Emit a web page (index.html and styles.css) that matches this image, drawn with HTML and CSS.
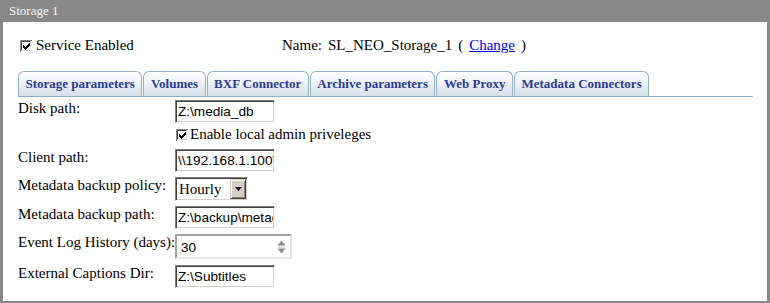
FILE: index.html
```html
<!DOCTYPE html>
<html lang="en">
<head>
<meta charset="utf-8">
<title>Storage 1</title>
<link rel="stylesheet" href="styles.css">
</head>
<body>
<div class="window">
  <div class="titlebar">Storage 1</div>
  <div class="content">
    <div class="header">
      <label class="check-label">
        <svg class="checkbox" width="12" height="12" viewBox="0 0 12 12"><rect x="0" y="0" width="12" height="12" fill="#fff"/><path d="M0.5 12V0.5H12" fill="none" stroke="#808080"/><path d="M1.5 11V1.5H11" fill="none" stroke="#404040"/><path d="M1 10.5H10.5V1" fill="none" stroke="#d4d0c8"/><path d="M3 5h1v3H3z M4 6h1v3H4z M5 7h1v3H5z M6 6h1v3H6z M7 5h1v3H7z M8 4h1v3H8z M9 3h1v3H9z" fill="#000"/></svg>
        <span>Service Enabled</span>
      </label>
      <div class="name">
        <span>Name:</span>
        <span class="name-value">SL_NEO_Storage_1</span>
        <span class="paren">(</span>
        <a class="link" href="#">Change</a>
        <span>)</span>
      </div>
    </div>

    <div class="tabs">
      <div class="tab">Storage parameters</div>
      <div class="tab">Volumes</div>
      <div class="tab">BXF Connector</div>
      <div class="tab">Archive parameters</div>
      <div class="tab">Web Proxy</div>
      <div class="tab">Metadata Connectors</div>
    </div>

    <div class="form">
      <div class="label">Disk path:</div>
      <div class="ctrl"><input class="text" type="text" value="Z:\media_db"></div>

      <div class="label"></div>
      <div class="ctrl">
        <label class="check-label sub">
          <svg class="checkbox" width="12" height="12" viewBox="0 0 12 12"><rect x="0" y="0" width="12" height="12" fill="#fff"/><path d="M0.5 12V0.5H12" fill="none" stroke="#808080"/><path d="M1.5 11V1.5H11" fill="none" stroke="#404040"/><path d="M1 10.5H10.5V1" fill="none" stroke="#d4d0c8"/><path d="M3 5h1v3H3z M4 6h1v3H4z M5 7h1v3H5z M6 6h1v3H6z M7 5h1v3H7z M8 4h1v3H8z M9 3h1v3H9z" fill="#000"/></svg>
          <span>Enable local admin priveleges</span>
        </label>
      </div>

      <div class="label">Client path:</div>
      <div class="ctrl"><input class="text" type="text" value="\\192.168.1.100\media"></div>

      <div class="label">Metadata backup policy:</div>
      <div class="ctrl">
        <div class="select">
          <span class="select-value">Hourly</span>
          <span class="select-btn"><svg width="7" height="4" viewBox="0 0 7 4"><path d="M0 0H7L3.5 4Z" fill="#000"/></svg></span>
        </div>
      </div>

      <div class="label">Metadata backup path:</div>
      <div class="ctrl"><input class="text" type="text" value="Z:\backup\metadata"></div>

      <div class="label">Event Log History (days):</div>
      <div class="ctrl">
        <div class="number">
          <span class="number-value">30</span>
          <svg class="spin" width="9" height="14" viewBox="0 0 9 14"><path d="M0.5 5.5L4.5 0.5L8.5 5.5Z" fill="#8c8c8c"/><path d="M1 7H8" stroke="#c4c4c4"/><path d="M0.5 8.5L4.5 13.5L8.5 8.5Z" fill="#8c8c8c"/></svg>
        </div>
      </div>

      <div class="label">External Captions Dir:</div>
      <div class="ctrl"><input class="text" type="text" value="Z:\Subtitles"></div>
    </div>
  </div>
</div>
</body>
</html>
```

FILE: styles.css
```css
html, body {
  margin: 0;
  padding: 0;
  background: #fff;
}

.window {
  box-sizing: border-box;
  width: 770px;
  height: 303px;
  border-style: solid;
  border-color: #888888;
  border-width: 0 3px 2px 3px;
  background: #fff;
  font-family: "Liberation Serif", "Times New Roman", serif;
  font-size: 15px;
  color: #000;
  overflow: hidden;
}

.titlebar {
  height: 22px;
  line-height: 22px;
  background: #888888;
  color: #f6f6f6;
  font-size: 13px;
  padding-left: 6px;
}

.content {
  display: flex;
  flex-direction: column;
}

.header {
  display: grid;
  grid-template-columns: 262px auto;
  padding: 15px 0 0 17px;
  line-height: 17px;
}

.check-label {
  display: inline-flex;
  align-items: center;
  gap: 4px;
  line-height: 17px;
}

.check-label.sub {
  gap: 2px;
  margin-left: 1px;
}

.checkbox {
  display: block;
  flex: none;
}

.name {
  display: flex;
  gap: 6px;
}

.link {
  color: #0000ee;
  text-decoration: underline;
}

.tabs {
  display: flex;
  gap: 1px;
  margin: 17px 14px 0 15px;
  border-bottom: 1px solid #8fb0c3;
  height: 25px;
  align-items: flex-end;
}

.tab {
  box-sizing: border-box;
  height: 25px;
  line-height: 24px;
  padding: 0 6.5px;
  border: 1px solid #91b2c6;
  border-bottom: none;
  border-radius: 6px 6px 0 0;
  background: linear-gradient(#ffffff 0%, #f2f6f9 35%, #d4e0e9 100%);
  color: #2b3a98;
  font-weight: bold;
  font-size: 13px;
  white-space: nowrap;
}

.form {
  display: grid;
  grid-template-columns: 157px auto;
  grid-template-rows: 26px 23px 28px 29px 28px 31px 25px;
  align-items: start;
  margin-top: 3px;
  padding-left: 15px;
}

.label {
  line-height: 17px;
  white-space: nowrap;
}

.ctrl {
  display: flex;
  align-items: flex-start;
  line-height: 17px;
}

.text {
  box-sizing: border-box;
  width: 100px;
  height: 23px;
  margin: 0;
  padding: 0 1px 0 2px;
  font-family: "Liberation Sans", Arial, sans-serif;
  font-size: 13.6px;
  color: #000;
  background: #fff;
  border-style: solid;
  border-width: 1px;
  border-color: #808080 #ffffff #ffffff #808080;
  box-shadow: inset 1px 1px 0 #404040, inset -1px -1px 0 #d4d0c8;
  outline: none;
  border-radius: 0;
}

.select {
  box-sizing: border-box;
  width: 73px;
  height: 24px;
  display: flex;
  align-items: stretch;
  border-style: solid;
  border-width: 1px;
  border-color: #808080 #ffffff #ffffff #808080;
  box-shadow: inset 1px 1px 0 #404040, inset -1px -1px 0 #d4d0c8;
  padding: 1px;
  background: #fff;
}

.select-value {
  flex: 1;
  padding-left: 2px;
  line-height: 21px;
  font-size: 15px;
}

.select-btn {
  box-sizing: border-box;
  width: 16px;
  display: flex;
  align-items: center;
  justify-content: center;
  background: #d4d0c8;
  border-style: solid;
  border-width: 1px;
  border-color: #d4d0c8 #404040 #404040 #d4d0c8;
  box-shadow: inset 1px 1px 0 #ffffff, inset -1px -1px 0 #808080;
}

.select-btn svg {
  display: block;
}

.number {
  box-sizing: border-box;
  width: 117px;
  height: 25px;
  display: flex;
  align-items: center;
  justify-content: space-between;
  padding: 0 4px 0 4px;
  border-style: solid;
  border-width: 2px;
  border-color: #a3a3a3 #e6e6e6 #e6e6e6 #a3a3a3;
  background: #fff;
}

.number-value {
  font-family: "Liberation Sans", Arial, sans-serif;
  font-size: 13.6px;
  padding-top: 2px;
}

.spin {
  display: block;
}
```
